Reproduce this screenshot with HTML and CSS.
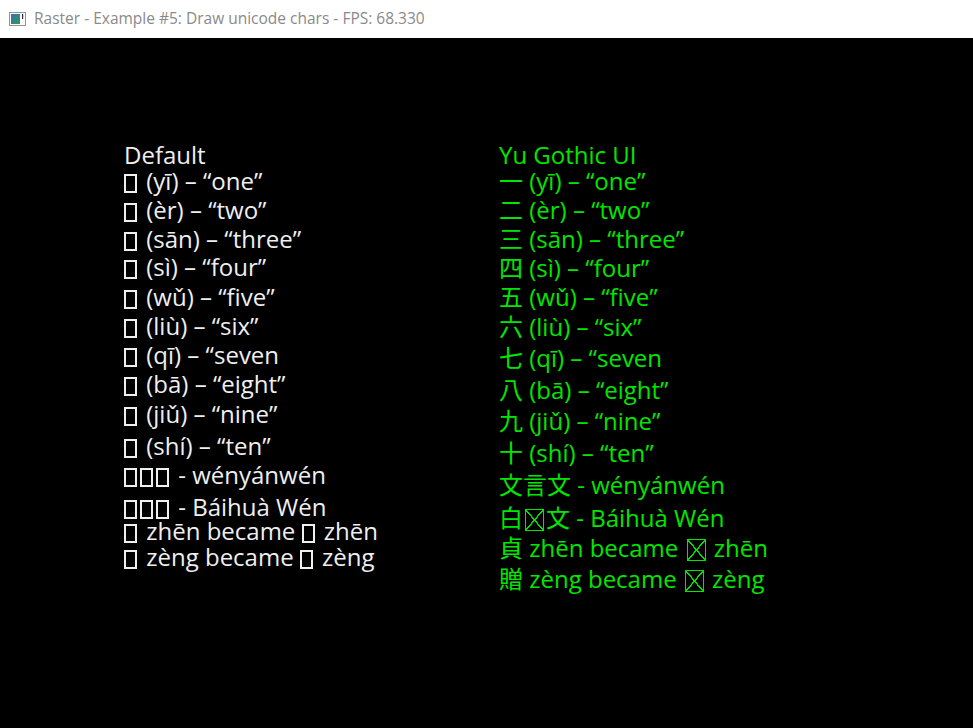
FILE: index.html
```html
<!DOCTYPE html>
<html>
<head>
<meta charset="utf-8">
<title>Raster - Example #5</title>
<link rel="stylesheet" href="styles.css">
</head>
<body>
<div class="titlebar">
  <svg class="appicon" width="17" height="14" viewBox="0 0 17 14">
    <defs>
      <linearGradient id="g" x1="0" y1="0" x2="1" y2="1">
        <stop offset="0" stop-color="#3b70b4"/>
        <stop offset="1" stop-color="#2e9a55"/>
      </linearGradient>
    </defs>
    <rect x="0.5" y="0.5" width="16" height="13" fill="#fdfdfd" stroke="#8a96a4"/>
    <rect x="2" y="2" width="9" height="10" fill="url(#g)"/>
    <rect x="13" y="2" width="1.2" height="5" fill="#2a2a2a"/>
  </svg>
  <span class="title">Raster - Example #5: Draw unicode chars - FPS: 68.330</span>
</div>
<main class="canvas">
  <section class="col left">
    <div class="ln h26">Default</div>
    <div class="ln h29"><span class="tofu"></span> (yī) – “one”</div>
    <div class="ln h29"><span class="tofu"></span> (èr) – “two”</div>
    <div class="ln h28"><span class="tofu"></span> (sān) – “three”</div>
    <div class="ln h30"><span class="tofu"></span> (sì) – “four”</div>
    <div class="ln h29"><span class="tofu"></span> (wǔ) – “five”</div>
    <div class="ln h29"><span class="tofu"></span> (liù) – “six”</div>
    <div class="ln h29"><span class="tofu"></span> (qī) – “seven</div>
    <div class="ln h30"><span class="tofu"></span> (bā) – “eight”</div>
    <div class="ln h32"><span class="tofu"></span> (jiǔ) – “nine”</div>
    <div class="ln h29"><span class="tofu"></span> (shí) – “ten”</div>
    <div class="ln h32"><span class="tofu"></span><span class="tofu"></span><span class="tofu"></span> - wényánwén</div>
    <div class="ln h24"><span class="tofu"></span><span class="tofu"></span><span class="tofu"></span> - Báihuà Wén</div>
    <div class="ln h26"><span class="tofu"></span> zhēn became <span class="tofu"></span> zhēn</div>
    <div class="ln h26"><span class="tofu"></span> zèng became <span class="tofu"></span> zèng</div>
  </section>
  <section class="col right">
    <div class="ln h26">Yu Gothic UI</div>
    <div class="ln h29">一 (yī) – “one”</div>
    <div class="ln h29">二 (èr) – “two”</div>
    <div class="ln h29">三 (sān) – “three”</div>
    <div class="ln h29">四 (sì) – “four”</div>
    <div class="ln h30">五 (wǔ) – “five”</div>
    <div class="ln h31">六 (liù) – “six”</div>
    <div class="ln h32">七 (qī) – “seven</div>
    <div class="ln h31">八 (bā) – “eight”</div>
    <div class="ln h32">九 (jiǔ) – “nine”</div>
    <div class="ln h32">十 (shí) – “ten”</div>
    <div class="ln h33">文言文 - wényánwén</div>
    <div class="ln h30">白<span class="xbox"></span>文 - Báihuà Wén</div>
    <div class="ln h31">貞 zhēn became <span class="xbox"></span> zhēn</div>
    <div class="ln h31">贈 zèng became <span class="xbox"></span> zèng</div>
  </section>
</main>
</body>
</html>
```

FILE: styles.css
```css
html, body {
  margin: 0;
  padding: 0;
  background: #000;
}
body {
  width: 973px;
  height: 728px;
  overflow: hidden;
}
.titlebar {
  height: 38px;
  background: #fff;
  display: flex;
  align-items: center;
  padding-left: 9px;
  box-sizing: border-box;
  gap: 8px;
}
.appicon {
  flex: none;
  margin-top: -1px;
}
.title {
  font-family: "Open Sans", "Noto Sans", sans-serif;
  font-size: 15.5px;
  color: #8a8a8a;
  margin-top: -2px;
}
.canvas {
  display: flex;
  padding-top: 105px;
  padding-left: 124px;
}
.col {
  font-family: "Open Sans", "Noto Sans CJK JP", sans-serif;
  font-size: 24px;
}
.left {
  width: 375px;
  color: #efefef;
}
.right {
  color: #00e600;
}
.ln {
  height: 29px;
  line-height: 24px;
  white-space: nowrap;
}
.h24 { height: 24px; }
.h26 { height: 26px; }
.h28 { height: 28px; }
.h29 { height: 29px; }
.h30 { height: 30px; }
.h31 { height: 31px; }
.h32 { height: 32px; }
.h33 { height: 33px; }
.tofu {
  display: inline-block;
  width: 13px;
  height: 19px;
  border: 2px solid currentColor;
  box-sizing: border-box;
  vertical-align: -3px;
  margin-right: 3px;
}
.xbox {
  display: inline-block;
  width: 19px;
  height: 22px;
  border: 1.5px solid currentColor;
  box-sizing: border-box;
  vertical-align: -4px;
  margin: 0 2px;
  background:
    linear-gradient(to top right, transparent calc(50% - 0.8px), currentColor calc(50% - 0.6px), currentColor calc(50% + 0.6px), transparent calc(50% + 0.8px)),
    linear-gradient(to bottom right, transparent calc(50% - 0.8px), currentColor calc(50% - 0.6px), currentColor calc(50% + 0.6px), transparent calc(50% + 0.8px));
}
```
